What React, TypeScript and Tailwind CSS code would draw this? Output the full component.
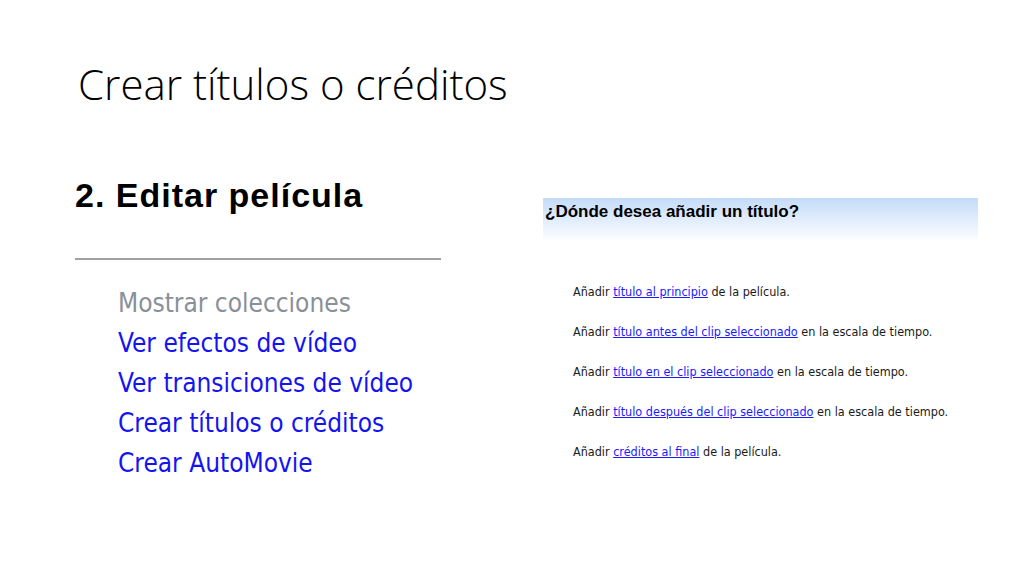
export default function App() {
  const rows = [
    { link: 'título al principio', rest: 'de la película.' },
    { link: 'título antes del clip seleccionado', rest: 'en la escala de tiempo.' },
    { link: 'título en el clip seleccionado', rest: 'en la escala de tiempo.' },
    { link: 'título después del clip seleccionado', rest: 'en la escala de tiempo.' },
    { link: 'créditos al final', rest: 'de la película.' },
  ];
  const tasks = ['Ver efectos de vídeo', 'Ver transiciones de vídeo', 'Crear títulos o créditos', 'Crear AutoMovie'];

  return (
    <div className="w-[1024px] h-[576px] bg-white overflow-hidden">
      {/* Slide title */}
      <h1 className="pl-[78px] pt-[57px] text-[42px] leading-[54px] font-light text-black font-['Open_Sans',sans-serif]">
        Crear títulos o créditos
      </h1>

      <div className="flex mt-[64px]">
        {/* Left: task pane */}
        <div className="w-[468px] pl-[75px] shrink-0">
          <h2 className="text-[34px] leading-[40px] font-bold tracking-[1px] text-black font-['Liberation_Sans',sans-serif]">
            2. Editar película
          </h2>
          <div className="mt-[43px] w-[366px] h-[2px] bg-[#a0a0a0]" />
          <ul className="mt-[23px] pl-[43px] text-[26px] leading-[40px] font-['DejaVu_Sans',sans-serif] [font-stretch:condensed]">
            <li className="text-[#8a8f98]">Mostrar colecciones</li>
            {tasks.map((t) => (
              <li key={t} className="text-[#1414f0]">{t}</li>
            ))}
          </ul>
        </div>

        {/* Right: add title dialog */}
        <div className="w-[435px] ml-[75px] mt-[23px]">
          <div className="h-[44px] pl-[2px] pt-[4px] bg-gradient-to-b from-[#c4dbf8] to-white">
            <p className="text-[17px] leading-[20px] font-bold text-black font-['Liberation_Sans',sans-serif]">
              ¿Dónde desea añadir un título?
            </p>
          </div>
          <ul className="mt-[30px] pl-[30px] text-[12.5px] leading-[40px] text-[#1a1a1a] font-['DejaVu_Sans',sans-serif] [font-stretch:condensed]">
            {rows.map((r) => (
              <li key={r.link}>
                Añadir <a className="text-[#1a1aff] underline">{r.link}</a> {r.rest}
              </li>
            ))}
          </ul>
        </div>
      </div>
    </div>
  );
}
